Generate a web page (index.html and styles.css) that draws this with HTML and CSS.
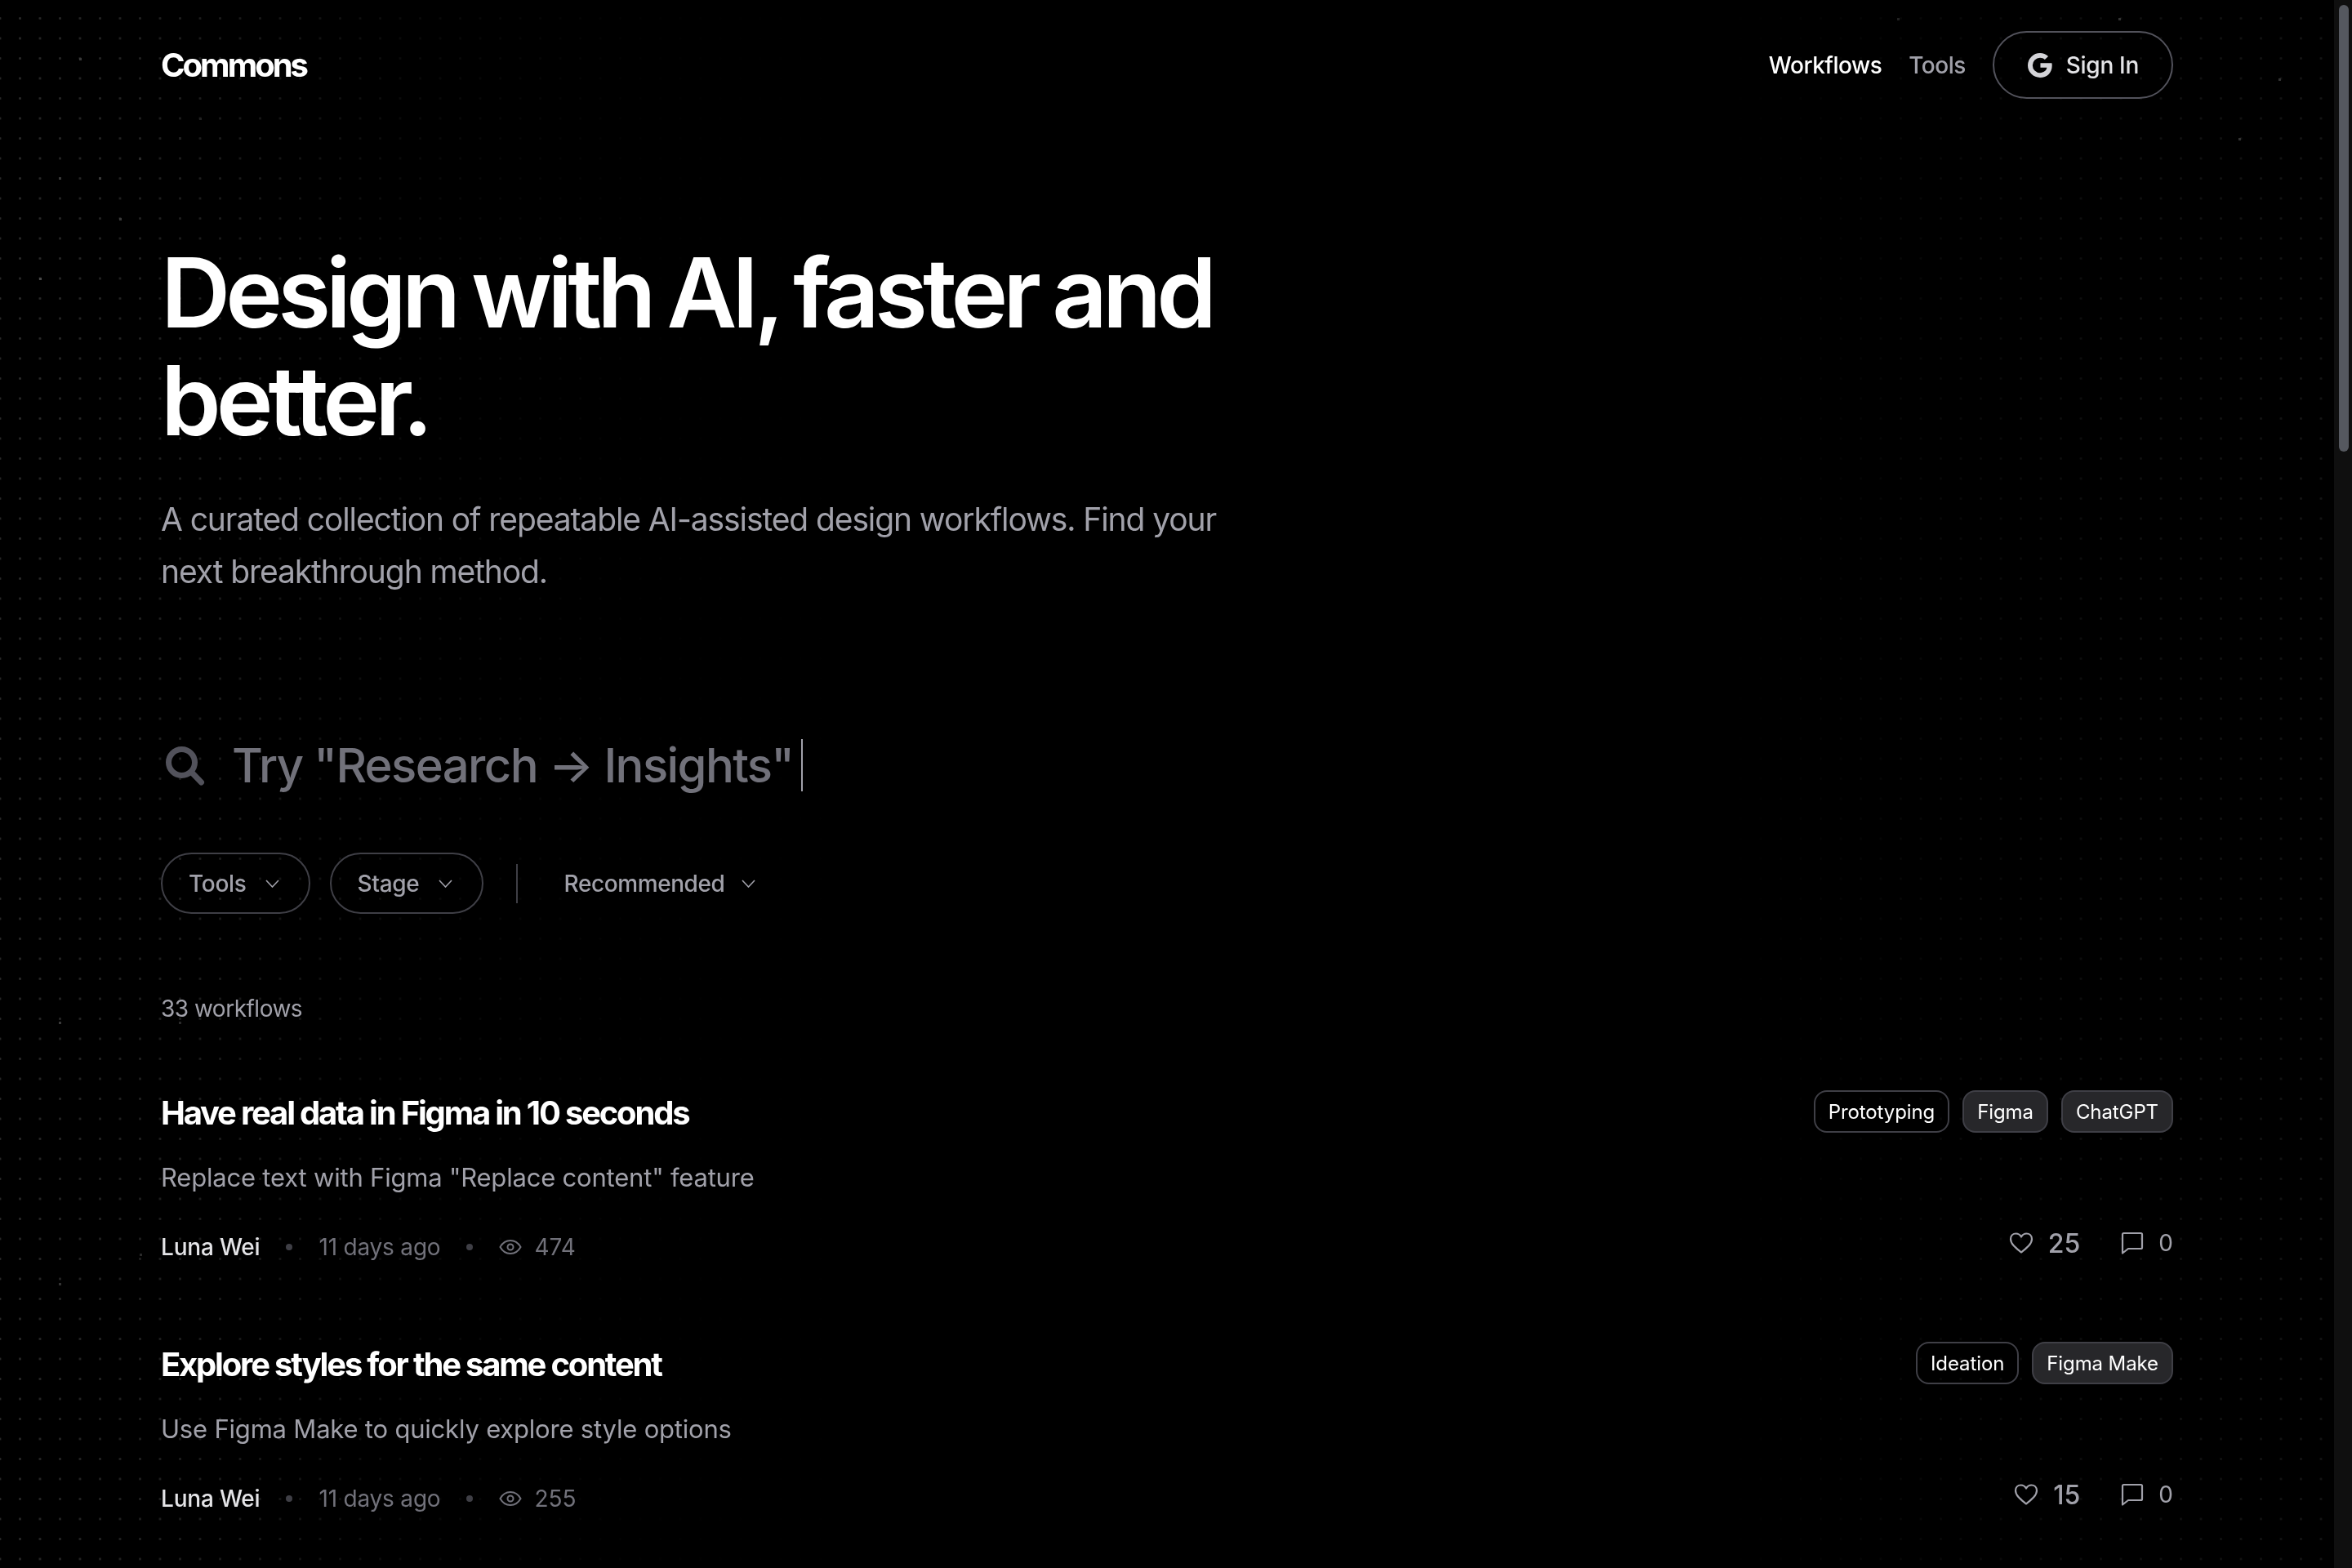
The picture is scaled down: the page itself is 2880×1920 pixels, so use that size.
FILE: index.html
```html
<!DOCTYPE html>
<html lang="en">
<head>
    <meta charset="UTF-8">
    <meta name="viewport" content="width=device-width, initial-scale=1.0">
    <title>Commons</title>
    <link rel="stylesheet" href="styles.css">
</head>
<body>
<div class="dots"></div>
<div class="sparks"></div>
<div class="page">
    <header class="topbar">
        <div class="logo">Commons</div>
        <nav class="nav">
            <a class="nav-link active">Workflows</a>
            <a class="nav-link">Tools</a>
            <button class="sign-in">
                <svg class="g-icon" viewBox="0 0 24 24"><path d="M21.6 10.2H12.3v3.7h5.300c-.5 2.600-2.700 4.200-5.600 4.200a6.100 6.100 0 0 1 0-12.200c1.500 0 2.900.5 3.900 1.500l2.800-2.800A10 10 0 0 0 12 2a10 10 0 1 0 0 20c5.800 0 9.800-4.100 9.800-9.900 0-.7-.1-1.300-.2-1.900z" fill="#d4d4d8"/></svg>
                <span>Sign In</span>
            </button>
        </nav>
    </header>

    <section class="hero">
        <h1>Design with AI, faster and<br>better.</h1>
        <p>A curated collection of repeatable AI-assisted design workflows. Find your<br>next breakthrough method.</p>
    </section>

    <div class="search">
        <svg class="search-icon" viewBox="0 0 60 60" fill="none"><circle cx="25.5" cy="26.5" r="16" stroke="#52525b" stroke-width="7"/><path d="M37.500 38.500L49.500 51" stroke="#52525b" stroke-width="7" stroke-linecap="round"/></svg>
        <span class="search-text">Try "Research → Insights"</span>
        <span class="caret"></span>
    </div>

    <div class="filters">
        <button class="pill">Tools <svg class="chev" viewBox="0 0 17 10" fill="none"><path d="M1 1l7.500 8L16 1" stroke="currentColor" stroke-width="1.6"/></svg></button>
        <button class="pill">Stage <svg class="chev" viewBox="0 0 17 10" fill="none"><path d="M1 1l7.500 8L16 1" stroke="currentColor" stroke-width="1.6"/></svg></button>
        <span class="divider"></span>
        <button class="sort">Recommended <svg class="chev" viewBox="0 0 17 10" fill="none"><path d="M1 1l7.500 8L16 1" stroke="currentColor" stroke-width="1.6"/></svg></button>
    </div>

    <div class="count">33 workflows</div>

    <!-- Workflow list -->
    <article class="card">
        <div class="card-top">
            <h2>Have real data in Figma in 10 seconds</h2>
            <div class="tags">
                <span class="tag">Prototyping</span>
                <span class="tag filled">Figma</span>
                <span class="tag filled">ChatGPT</span>
            </div>
        </div>
        <p class="desc">Replace text with Figma "Replace content" feature</p>
        <div class="card-bottom">
            <div class="meta">
                <span class="author">Luna Wei</span>
                <span class="sep"></span>
                <span>11 days ago</span>
                <span class="sep"></span>
                <span class="views">
                    <svg class="eye" viewBox="0 0 28 20" fill="none"><path d="M1.500 10C4.500 4.500 9 2 14 2s9.500 2.500 12.500 8c-3 5.500-7.500 8-12.500 8S4.500 15.500 1.500 10z" stroke="currentColor" stroke-width="2"/><circle cx="14" cy="10" r="3.5" stroke="currentColor" stroke-width="2"/></svg>
                    474
                </span>
            </div>
            <div class="stats">
                <span class="stat likes"><svg class="heart" viewBox="0 0 30 28" fill="none"><path d="M15 25.500C9 20.500 2 15.500 2 9.200 2 5 5 2.500 8.500 2.500c2.700 0 5 1.300 6.500 4 1.500-2.700 3.800-4 6.500-4C25 2.500 28 5 28 9.200c0 6.300-7 11.300-13 16.300z" stroke="currentColor" stroke-width="2.2" stroke-linejoin="round"/></svg>25</span>
                <span class="stat"><svg class="bubble" viewBox="0 0 28 28" fill="none"><path d="M2 3.500A1.500 1.500 0 0 1 3.500 2h21A1.500 1.500 0 0 1 26 3.500v16a1.500 1.500 0 0 1-1.500 1.500H9l-7 5.500z" stroke="currentColor" stroke-width="2.2" stroke-linejoin="round"/></svg>0</span>
            </div>
        </div>
    </article>

    <article class="card">
        <div class="card-top">
            <h2>Explore styles for the same content</h2>
            <div class="tags">
                <span class="tag">Ideation</span>
                <span class="tag filled">Figma Make</span>
            </div>
        </div>
        <p class="desc">Use Figma Make to quickly explore style options</p>
        <div class="card-bottom">
            <div class="meta">
                <span class="author">Luna Wei</span>
                <span class="sep"></span>
                <span>11 days ago</span>
                <span class="sep"></span>
                <span class="views">
                    <svg class="eye" viewBox="0 0 28 20" fill="none"><path d="M1.500 10C4.500 4.500 9 2 14 2s9.500 2.500 12.500 8c-3 5.500-7.500 8-12.500 8S4.500 15.500 1.500 10z" stroke="currentColor" stroke-width="2"/><circle cx="14" cy="10" r="3.5" stroke="currentColor" stroke-width="2"/></svg>
                    255
                </span>
            </div>
            <div class="stats">
                <span class="stat likes"><svg class="heart" viewBox="0 0 30 28" fill="none"><path d="M15 25.500C9 20.500 2 15.500 2 9.200 2 5 5 2.500 8.500 2.500c2.700 0 5 1.300 6.500 4 1.500-2.700 3.800-4 6.500-4C25 2.500 28 5 28 9.200c0 6.300-7 11.300-13 16.300z" stroke="currentColor" stroke-width="2.2" stroke-linejoin="round"/></svg>15</span>
                <span class="stat"><svg class="bubble" viewBox="0 0 28 28" fill="none"><path d="M2 3.500A1.500 1.500 0 0 1 3.500 2h21A1.500 1.500 0 0 1 26 3.500v16a1.500 1.500 0 0 1-1.500 1.500H9l-7 5.500z" stroke="currentColor" stroke-width="2.2" stroke-linejoin="round"/></svg>0</span>
            </div>
        </div>
    </article>
</div>
<div class="scrollbar"><div class="thumb"></div></div>
</body>
</html>
```

FILE: styles.css
```css
* {
    box-sizing: border-box;
}

html, body {
    margin: 0;
    height: 100%;
}

body {
    display: flex;
    height: 1920px;
    overflow: hidden;
    background: #000;
    color: #fff;
    font-family: "Inter", "Liberation Sans", sans-serif;
}

/* Dot field behind the page */
.dots {
    position: fixed;
    top: 0;
    left: 0;
    width: 2858px;
    height: 1920px;
    background-image: radial-gradient(circle at 1.5px 1.5px, rgba(255, 255, 255, 0.16) 1.2px, transparent 1.8px);
    background-size: 24.5px 24.5px;
    background-position: -1.5px 21px;
    -webkit-mask-image: linear-gradient(to right, #000 0, rgba(0, 0, 0, 0.7) 250px, rgba(0, 0, 0, 0.25) 500px, rgba(0, 0, 0, 0.05) 800px, transparent 1100px, transparent 2100px, rgba(0, 0, 0, 0.3) 2500px, rgba(0, 0, 0, 0.5) 2858px);
    mask-image: linear-gradient(to right, #000 0, rgba(0, 0, 0, 0.7) 250px, rgba(0, 0, 0, 0.25) 500px, rgba(0, 0, 0, 0.05) 800px, transparent 1100px, transparent 2100px, rgba(0, 0, 0, 0.3) 2500px, rgba(0, 0, 0, 0.5) 2858px);
}

/* The few dots that are brighter than the rest */
.sparks {
    position: fixed;
    top: 0;
    left: 0;
    width: 3px;
    height: 3px;
    background: transparent;
    box-shadow: 97px 71px #3a3a3a, 244px 144px #222, 219px 168px #222, 170px 193px #2a2a2a, 72px 217px #3a3a3a, 121px 217px #3a3a3a, 146px 267px #3a3a3a, 48px 340px #4a4a4a, 72px 1251px #3a3a3a, 219px 1251px #2a2a2a, 171px 1535px #2a2a2a, 72px 1571px #333, 2594px 22px #333, 2323px 22px #222, 2790px 96px #333, 2741px 169px #333;
}

.page {
    position: relative;
    flex: 1;
    padding: 0 197px;
}

.scrollbar {
    position: relative;
    width: 22px;
    padding: 6px 4px 0 6px;
    background: #0f0f0f;
}

.thumb {
    height: 547px;
    border-radius: 6px;
    background: #55585f;
}

/* Top bar */
.topbar {
    display: flex;
    align-items: center;
    justify-content: space-between;
    height: 83px;
    margin-top: 38px;
}

.logo {
    font-size: 40px;
    font-weight: 700;
    letter-spacing: -0.075em;
}

.nav {
    display: flex;
    align-items: center;
}

.nav-link {
    margin-right: 33px;
    font-size: 28px;
    font-weight: 500;
    letter-spacing: -0.5px;
    color: #a1a1aa;
}

.nav-link.active {
    color: #fff;
}

.sign-in {
    display: flex;
    align-items: center;
    gap: 14px;
    height: 83px;
    padding: 0 40px 0 38px;
    border: 2px solid #52525b;
    border-radius: 42px;
    background: transparent;
    color: #e4e4e7;
    font-family: inherit;
    font-size: 28px;
    font-weight: 500;
    letter-spacing: -0.3px;
}

.g-icon {
    width: 36px;
    height: 36px;
}

/* Hero */
.hero {
    margin-top: 171px;
}

.hero h1 {
    margin: 0;
    font-size: 118px;
    font-weight: 600;
    line-height: 132px;
    letter-spacing: -5.9px;
    word-spacing: -5px;
}

.hero p {
    margin: 48px 0 0;
    font-size: 39px;
    line-height: 64px;
    letter-spacing: -1.1px;
    color: #a1a1aa;
}

/* Search */
.search {
    display: flex;
    align-items: center;
    height: 64px;
    margin-top: 173px;
}

.search-icon {
    width: 60px;
    height: 60px;
    margin-right: 27px;
}

.search-text {
    font-size: 58px;
    font-weight: 550;
    letter-spacing: -1.6px;
    color: #71717a;
}

.caret {
    width: 2px;
    height: 64px;
    margin-left: 10px;
    background: #a1a1aa;
}

/* Filters */
.filters {
    display: flex;
    align-items: center;
    margin-top: 75px;
}

.pill {
    display: flex;
    align-items: center;
    gap: 23px;
    height: 75px;
    margin-right: 24px;
    padding: 0 36px 0 32px;
    border: 2px solid #3f3f46;
    border-radius: 38px;
    background: transparent;
    color: #a1a1aa;
    font-family: inherit;
    font-size: 28px;
    font-weight: 500;
    letter-spacing: -0.3px;
}

.divider {
    width: 2px;
    height: 48px;
    margin: 0 57px 0 16px;
    background: #3f3f46;
}

.sort {
    display: flex;
    align-items: center;
    gap: 20px;
    padding: 0;
    border: none;
    background: transparent;
    color: #a1a1aa;
    font-family: inherit;
    font-size: 28px;
    font-weight: 500;
    letter-spacing: -0.4px;
}

.chev {
    width: 17px;
    height: 10px;
}

.count {
    margin-top: 98px;
    font-size: 28px;
    line-height: 36px;
    letter-spacing: -0.5px;
    color: #a1a1aa;
}

/* Cards */
.card {
    height: 308px;
}

.count + .card {
    margin-top: 82px;
}

.card-top {
    display: flex;
    align-items: flex-start;
    justify-content: space-between;
}

.card h2 {
    margin: 0;
    font-size: 40px;
    font-weight: 650;
    line-height: 56px;
    letter-spacing: -2.2px;
}

.tags {
    display: flex;
    gap: 16px;
}

.tag {
    display: flex;
    align-items: center;
    height: 52px;
    padding: 0 16px;
    border: 2px solid #3f3f46;
    border-radius: 16px;
    font-size: 24px;
    letter-spacing: -0.1px;
    color: #fff;
}

.tag.filled {
    background: #27272a;
}

.desc {
    margin: 27px 0 0;
    font-size: 31px;
    line-height: 48px;
    letter-spacing: -0.2px;
    color: #a1a1aa;
}

.card-bottom {
    display: flex;
    align-items: center;
    justify-content: space-between;
    margin-top: 29px;
}

.meta {
    display: flex;
    align-items: center;
    padding-top: 10px;
    font-size: 28px;
    line-height: 44px;
    letter-spacing: -0.2px;
    color: #71717a;
}

.author {
    font-weight: 500;
    color: #e4e4e7;
}

.sep {
    width: 8px;
    height: 8px;
    margin: 0 32px;
    border-radius: 50%;
    background: #3f3f46;
}

.views {
    display: flex;
    align-items: center;
    gap: 15px;
    letter-spacing: 0;
}

.eye {
    width: 28px;
    height: 20px;
}

.stats {
    display: flex;
    align-items: center;
    gap: 50px;
    color: #a1a1aa;
    font-size: 28px;
}

.stat {
    display: flex;
    align-items: center;
    gap: 18px;
}

.likes {
    font-size: 32px;
    font-weight: 500;
}

.heart {
    width: 30px;
    height: 28px;
}

.bubble {
    width: 28px;
    height: 28px;
}
```
